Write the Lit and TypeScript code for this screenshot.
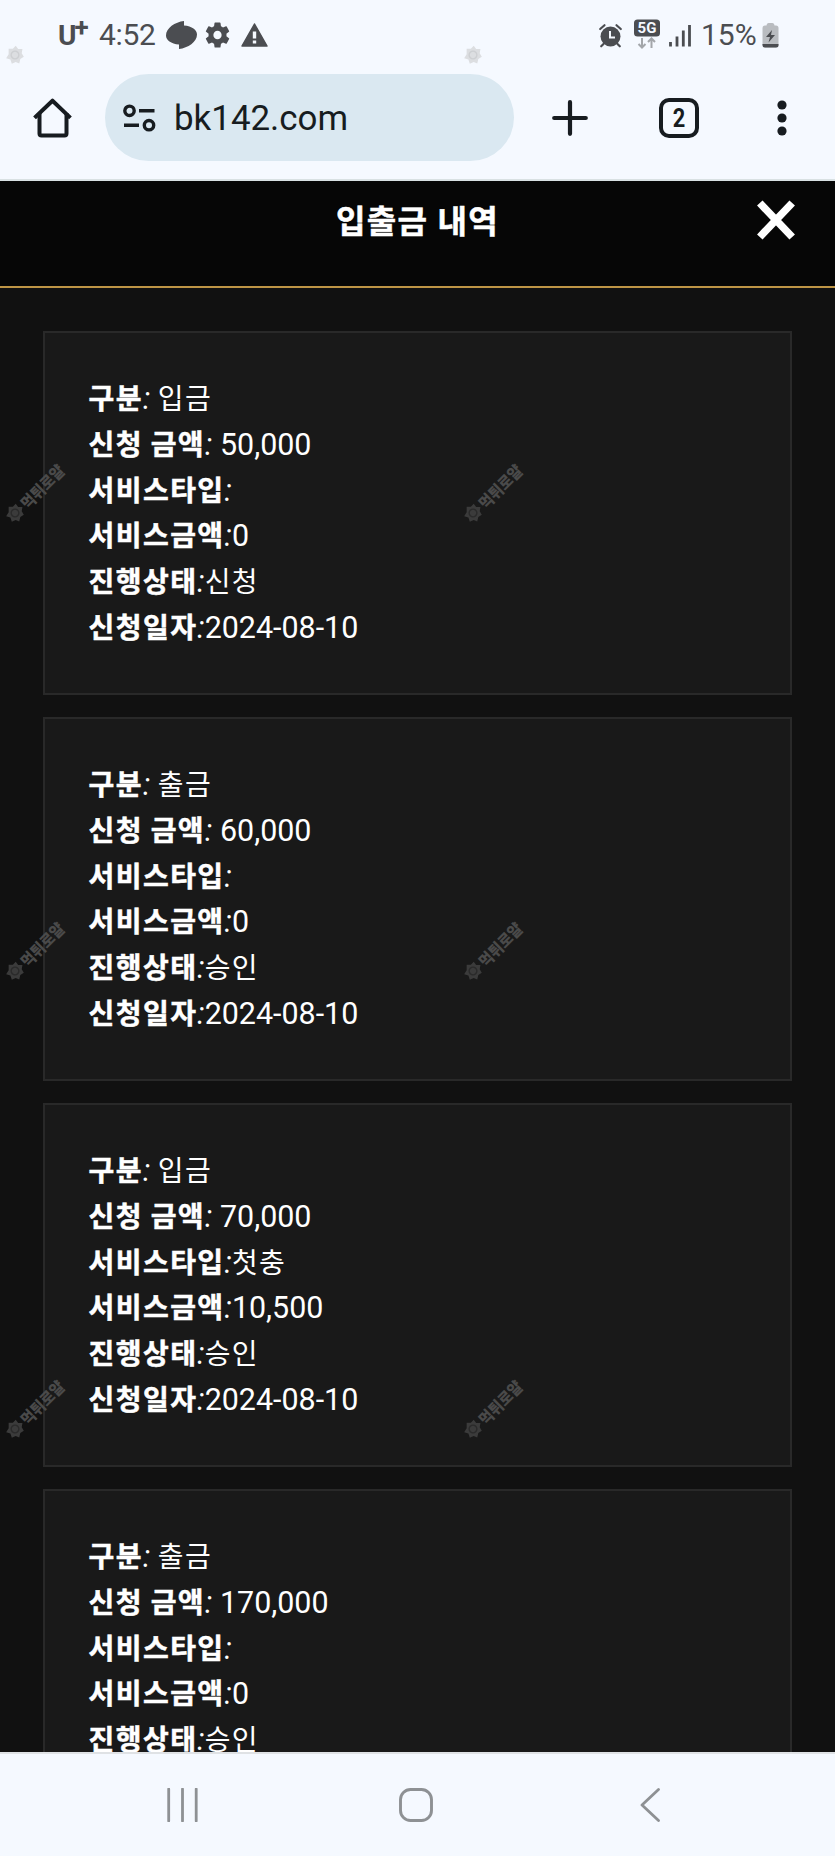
import { LitElement, html, css, svg } from "lit";
import { customElement, property } from "lit/decorators.js";

interface Entry {
  kind: string;
  amount: string;
  serviceType: string;
  serviceAmount: string;
  status: string;
  date: string;
}

const ENTRIES: Entry[] = [
  { kind: "입금", amount: "50,000", serviceType: "", serviceAmount: "0", status: "신청", date: "2024-08-10" },
  { kind: "출금", amount: "60,000", serviceType: "", serviceAmount: "0", status: "승인", date: "2024-08-10" },
  { kind: "입금", amount: "70,000", serviceType: "첫충", serviceAmount: "10,500", status: "승인", date: "2024-08-10" },
  { kind: "출금", amount: "170,000", serviceType: "", serviceAmount: "0", status: "승인", date: "2024-08-10" },
];

@customElement("status-bar")
export class StatusBar extends LitElement {
  static styles = css`
    :host { display: flex; justify-content: space-between; height: 70px; padding: 0 56px 0 58px; box-sizing: border-box; color: #4b4d51; font-family: Roboto, sans-serif; font-size: 30px; }
    .left, .right { display: flex; height: 70px; align-items: center; }
    svg { display: block; flex: none; overflow: visible; }
    .carrier { width: 33px; height: 70px; display: flex; font: 700 28px/72px Roboto, sans-serif; }
    .plus { font-size: 26px; line-height: 54px; margin-left: -2px; }
    .time { margin-left: 8px; width: 66px; line-height: 70px; letter-spacing: -0.3px; }
    .chat { margin-left: 1px; }
    .gear { margin-left: 8px; }
    .warn { margin-left: 11px; }
    .net { margin-left: 12.5px; }
    .signal { margin-left: 9px; }
    .pct { margin-left: 10px; line-height: 70px; width: 61px; }
    .g5 { font: 700 15px Roboto, sans-serif; }
  `;
  render() {
    return html`
      <div class="left">
        <div class="carrier"><span>U</span><span class="plus">+</span></div>
        <span class="time">4:52</span>
        <svg class="chat" width="31" height="28" viewBox="0 0 31 28" fill="#4b4d51"><path d="M18 0v4.500C26 5 31 9 31 13.500 31 21 22 27 13 28v-4.500C5 23 0 19 0 14.500 0 7 9 1 18 0z"/></svg>
        <svg class="gear" width="25" height="26" viewBox="2 2 20 20" preserveAspectRatio="none" fill="#4b4d51"><path d="M19.140 12.940c.04-.3.060-.61.060-.94s-.02-.64-.07-.94l2.030-1.580a.49.49 0 0 0 .12-.61l-1.920-3.320a.49.49 0 0 0-.59-.22l-2.390.96a7 7 0 0 0-1.620-.94l-.36-2.540A.48.48 0 0 0 13.920 2.400h-3.840a.48.48 0 0 0-.47.410l-.36 2.540c-.59.24-1.130.57-1.620.94l-2.390-.96a.48.48 0 0 0-.59.22L2.740 8.870a.48.48 0 0 0 .12.610l2.030 1.580a6 6 0 0 0 0 1.880l-2.030 1.580a.49.49 0 0 0-.12.610l1.920 3.320c.12.220.37.290.59.220l2.390-.96c.5.380 1.030.7 1.620.94l.36 2.540c.05.240.24.410.48.410h3.840c.24 0 .44-.17.470-.41l.36-2.540c.59-.24 1.130-.56 1.620-.94l2.390.96c.22.080.47 0 .59-.22l1.920-3.320a.48.48 0 0 0-.12-.61zM12 15.300A3.300 3.300 0 1 1 12 8.700a3.300 3.300 0 0 1 0 6.600z"/></svg>
        <svg class="warn" width="27" height="24" viewBox="0 0 27 24"><path d="M13.500 1 26 23H1z" fill="#4b4d51" stroke="#4b4d51" stroke-width="1.500" stroke-linejoin="round"/><path d="M13.500 8.500v7M13.500 17.500v3" stroke="#f5f9ff" stroke-width="3.400"/></svg>
      </div>
      <div class="right">
        <svg width="23" height="23" viewBox="0 0 23 23"><circle cx="11.500" cy="12.500" r="10" fill="#4b4d51"/><path d="M1.200 5 5.500 1.200M21.800 5 17.500 1.200M4.500 20l-2.300 2.300M18.500 20l2.300 2.300" stroke="#4b4d51" stroke-width="2.200" stroke-linecap="round"/><path d="M11 7v6.500h5" fill="none" stroke="#f5f9ff" stroke-width="2"/></svg>
        <svg class="net" width="26" height="30" viewBox="0 0 26 30"><rect y="-.5" width="26" height="17" rx="3.500" fill="#4b4d51"/><text class="g5" x="13" y="13.400" text-anchor="middle" fill="#f5f9ff">5G</text><path d="M8 18v9.500M4.500 24 8 27.500l3.500-3.500M17.500 28v-9.500M14 22l3.500-3.500L21 22" fill="none" stroke="#a3a6aa" stroke-width="2"/></svg>
        <svg class="signal" width="22" height="23" viewBox="0 0 22 23"><path d="M1.500 18v4.500M8 12.500v10M14.300 6.500v16M20.500 1v21.500" stroke="#4b4d51" stroke-width="2.800"/></svg>
        <span class="pct">15%</span>
        <svg width="17" height="25" viewBox="0 0 17 25"><path d="M4.500 2.500Q4.500 0 6.500 0h4q2 0 2 2.500H14q2.500 0 2.500 2.500V22q0 2.500-2.500 2.500H3Q.5 24.500.5 22V5Q.5 2.500 3 2.500z" fill="#b9bcc0"/><path d="M.5 21h16v1q0 2.500-2.500 2.500H3Q.5 24.500.5 22z" fill="#4b4d51"/><path d="M10 7 4 14h4l-1.500 5.500L13 12H9z" fill="#4b4d51"/></svg>
      </div>`;
  }
}

@customElement("browser-bar")
export class BrowserBar extends LitElement {
  static styles = css`
    :host { display: flex; align-items: center; height: 111px; padding: 4px 40px 18px 33px; box-sizing: border-box; border-bottom: 2px solid #d9e1e3; color: #171c20; font-family: Roboto, sans-serif; }
    svg { display: block; flex: none; }
    .url { display: flex; align-items: center; width: 409px; height: 87px; margin-left: 32px; padding-left: 18px; box-sizing: border-box; border-radius: 44px; background: #dae8f1; }
    .domain { margin-left: 18px; padding-top: 2px; font-size: 34.9px; line-height: 85px; }
    .plus { margin-left: 38px; }
    .tabs { margin-left: 71px; width: 40px; height: 40px; box-sizing: border-box; border: 4px solid #171c20; border-radius: 10px; font: 700 26px/32px Roboto, sans-serif; text-align: center; }
    .count { display: block; transform: scaleX(.84); }
    .more { margin-left: auto; margin-right: 8px; }
  `;
  render() {
    return html`
      <svg width="40" height="40" viewBox="0 0 40 40" fill="none" stroke="#171c20" stroke-width="4" stroke-linejoin="round" stroke-linecap="square"><path d="M6.500 17v18.500q0 2 2 2h23q2 0 2-2V17"/><path d="M3 18.500 19.500 2.700 36 18.500"/></svg>
      <div class="url">
        <svg width="33" height="28" viewBox="0 0 33 28" fill="none" stroke="#171c20" stroke-width="3.400"><circle cx="6.500" cy="6.800" r="4.700"/><path d="M16 6.800h15.500M1 21.200h15"/><circle cx="26" cy="21.200" r="4.700"/></svg>
        <span class="domain">bk142.com</span>
      </div>
      <svg class="plus" width="36" height="36" viewBox="0 0 36 36"><path d="M18 2.200v31.600M2.200 18h31.600" stroke="#171c20" stroke-width="4.200" stroke-linecap="round"/></svg>
      <div class="tabs"><span class="count">2</span></div>
      <svg class="more" width="10" height="36" viewBox="0 0 10 36" fill="#171c20"><circle cx="5" cy="5" r="4.600"/><circle cx="5" cy="18" r="4.600"/><circle cx="5" cy="31" r="4.600"/></svg>`;
  }
}

@customElement("history-card")
export class HistoryCard extends LitElement {
  @property({ attribute: false }) entry!: Entry;
  static styles = css`
    :host { display: block; flex: none; height: 364px; padding: 43.2px 43.5px 0; box-sizing: border-box; border: 2px solid #292929; background: #191919; color: #fff; }
    .row { height: 45.75px; font: 400 30.45px/45.75px Roboto, "Noto Sans CJK KR", sans-serif; white-space: pre; }
    .label, .ko { font-family: Roboto, "Noto Sans CJK KR", sans-serif; font-size: 28px; line-height: 0; letter-spacing: 1.45px; }
    .label { font-weight: 700; word-spacing: -0.7px; -webkit-text-stroke: 0.5px #fff; }
    .colon { font-style: italic; }
  `;
  private row(label: string, sep: string, value: string, korean = false) {
    return html`<div class="row"><span class="label">${label}</span><span class="colon">:</span>${sep}<span class=${korean ? "ko" : "num"}>${value}</span></div>`;
  }
  render() {
    const e = this.entry;
    return html`${this.row("구분", " ", e.kind, true)}${this.row("신청 금액", " ", e.amount)}${this.row("서비스타입", "", e.serviceType, true)}${this.row("서비스금액", "", e.serviceAmount)}${this.row("진행상태", "", e.status, true)}${this.row("신청일자", "", e.date)}`;
  }
}

@customElement("nav-bar")
export class NavBar extends LitElement {
  static styles = css`
    :host { display: block; height: 104px; box-sizing: border-box; border-top: 2px solid #dfe2e5; background: #f5f9ff; }
    .keys { display: flex; align-items: center; padding: 34px 0 0 167px; }
    svg { display: block; flex: none; }
    .home { margin: 0 207px 0 201px; }
  `;
  render() {
    return html`<div class="keys">
      <svg width="31" height="34" viewBox="0 0 31 34"><path d="M1.700 1v32M15.500 1v32M29.200 1v32" stroke="#8e9194" stroke-width="2.800" stroke-linecap="round"/></svg>
      <svg class="home" width="34" height="34" viewBox="0 0 34 34"><rect x="1.500" y="1.500" width="31" height="31" rx="10" fill="none" stroke="#8e9194" stroke-width="2.900"/></svg>
      <svg width="20" height="34" viewBox="0 0 20 34"><path d="M18.500 1.500 2 17l16.500 15.500" fill="none" stroke="#8e9194" stroke-width="2.800" stroke-linecap="round" stroke-linejoin="round"/></svg>
    </div>`;
  }
}

@customElement("app-root")
export class AppRoot extends LitElement {
  static styles = css`
    :host { display: flex; flex-direction: column; position: relative; width: 835px; height: 1856px; overflow: hidden; background: #f5f9ff; }
    .page { display: flex; flex-direction: column; height: 1571px; flex: none; overflow: hidden; background: #111; }
    .head { flex: none; display: grid; grid-template-columns: 1fr auto 1fr; height: 107px; box-sizing: border-box; padding: 0 40px; border-bottom: 2px solid #bd9445; background: #060606; color: #fff; }
    .title { grid-column: 2; font: 700 32px/83px Roboto, "Noto Sans CJK KR", sans-serif; letter-spacing: 1.3px; -webkit-text-stroke: 0.5px #fff; }
    .close { justify-self: end; margin-top: 19px; }
    .list { display: flex; flex-direction: column; gap: 22px; padding: 43px 43px 0; }
    .marks { position: absolute; inset: 0; width: 835px; height: 1856px; pointer-events: none; }
    .mark { font: 900 16px "Noto Sans CJK KR", sans-serif; }
  `;
  private marks() {
    return [0, 1, 2, 3].flatMap((r) =>
      [0, 1].map((c) => svg`<g transform="translate(${15 + c * 458} ${55 + r * 458}) rotate(-45)">
        <path d="M0-9 3-6 7-6 6.500-2 9.500 1 6 3.500 5 7.500 1 6.500-3 9-4.500 5.500-8.500 4-6.500 0-8.500-4-4-5z" fill=${r ? "#3b3b3b" : "#dcdee1"}/>
        <circle r="3.800" fill="none" stroke=${r ? "#2a2a2a" : "#cdcfd2"} stroke-width="1.500"/>
        ${r ? svg`<text class="mark" x="11" y="7" textLength="54" lengthAdjust="spacingAndGlyphs" fill="#4a4a4a">먹튀로얄</text>` : ""}
      </g>`)
    );
  }
  render() {
    return html`
      <status-bar></status-bar>
      <browser-bar></browser-bar>
      <div class="page">
        <div class="head">
          <span class="title">입출금 내역</span>
          <svg class="close" width="38" height="40" viewBox="0 0 38 40"><path d="M2.800 3 35.200 37M35.200 3 2.800 37" stroke="#fff" stroke-width="7.600"/></svg>
        </div>
        <div class="list">${ENTRIES.map((e) => html`<history-card .entry=${e}></history-card>`)}</div>
      </div>
      <nav-bar></nav-bar>
      <svg class="marks" viewBox="0 0 835 1856">${this.marks()}</svg>`;
  }
}
